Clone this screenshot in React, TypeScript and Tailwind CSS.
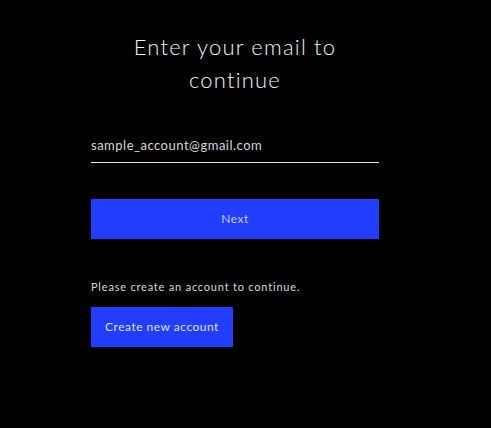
import React from 'react';

const App: React.FC = () => {
  return (
    <div className="w-[491px] h-[428px] bg-black font-['Lato',sans-serif] text-[#e4e4e4]">
      <div className="w-[288px] ml-[91px] pt-[30px] flex flex-col">
        <h1 className="text-[22px] leading-[33px] text-center tracking-[1.2px] font-light text-[#f2f2f2]">
          Enter your email to
          <br />
          continue
        </h1>

        <div className="mt-[40px] pb-[8px] border-b border-[#e4e4e4]">
          <div className="text-[13px] leading-[18px] tracking-[0.5px] text-[#d6d6d6]">sample_account@gmail.com</div>
        </div>

        <button className="mt-[36px] h-[40px] w-full bg-[#213dff] text-[12px] tracking-[0.5px] text-[#c8ccf5]">
          Next
        </button>

        <p className="mt-[41px] text-[11px] leading-[14px] tracking-[0.8px] text-[#d8d8d8]">
          Please create an account to continue.
        </p>

        <button className="mt-[13px] h-[40px] w-[142px] bg-[#213dff] text-[12px] tracking-[0.5px] text-[#dfe2ff]">
          Create new account
        </button>
      </div>
    </div>
  );
};

export default App;
